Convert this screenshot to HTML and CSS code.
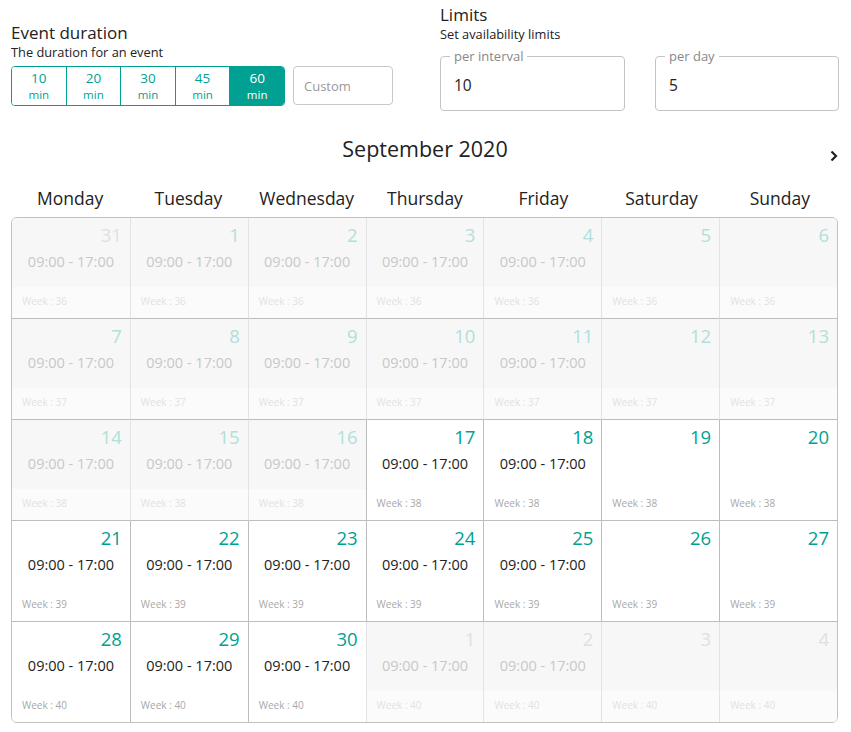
FILE: index.html
```html
<!DOCTYPE html>
<html>
<head>
<meta charset="utf-8">
<link rel="stylesheet" href="styles.css">
</head>
<body>
<div class="page">
  <div class="top">
    <section class="duration">
      <h2 class="title">Event duration</h2>
      <p class="sub">The duration for an event</p>
      <div class="dur-row">
        <div class="seg">
          <button class="seg-btn"><span class="num">10</span><span class="unit">min</span></button>
          <button class="seg-btn"><span class="num">20</span><span class="unit">min</span></button>
          <button class="seg-btn"><span class="num">30</span><span class="unit">min</span></button>
          <button class="seg-btn"><span class="num">45</span><span class="unit">min</span></button>
          <button class="seg-btn active"><span class="num">60</span><span class="unit">min</span></button>
        </div>
        <input class="custom" type="text" placeholder="Custom">
      </div>
    </section>
    <section class="limits">
      <h2 class="title">Limits</h2>
      <p class="sub">Set availability limits</p>
      <div class="fields">
        <fieldset class="field"><legend>per interval</legend><span class="val">10</span></fieldset>
        <fieldset class="field"><legend>per day</legend><span class="val">5</span></fieldset>
      </div>
    </section>
  </div>

  <div class="cal-head">
    <h1 class="month">September 2020</h1>
    <svg class="next" width="10" height="12" viewBox="0 0 10 12"><path d="M2.5 1.5 L7 6 L2.5 10.5" fill="none" stroke="#222" stroke-width="2.2"/></svg>
  </div>

  <div class="days">
    <div>Monday</div><div>Tuesday</div><div>Wednesday</div><div>Thursday</div><div>Friday</div><div>Saturday</div><div>Sunday</div>
  </div>

  <div class="grid">
    <!-- row 1 -->
    <div class="cell off out first"><div class="d">31</div><div class="t">09:00 - 17:00</div><div class="w">Week : 36</div></div>
    <div class="cell off"><div class="d">1</div><div class="t">09:00 - 17:00</div><div class="w">Week : 36</div></div>
    <div class="cell off"><div class="d">2</div><div class="t">09:00 - 17:00</div><div class="w">Week : 36</div></div>
    <div class="cell off"><div class="d">3</div><div class="t">09:00 - 17:00</div><div class="w">Week : 36</div></div>
    <div class="cell off"><div class="d">4</div><div class="t">09:00 - 17:00</div><div class="w">Week : 36</div></div>
    <div class="cell off"><div class="d">5</div><div class="w">Week : 36</div></div>
    <div class="cell off"><div class="d">6</div><div class="w">Week : 36</div></div>
    <!-- row 2 -->
    <div class="cell off first"><div class="d">7</div><div class="t">09:00 - 17:00</div><div class="w">Week : 37</div></div>
    <div class="cell off"><div class="d">8</div><div class="t">09:00 - 17:00</div><div class="w">Week : 37</div></div>
    <div class="cell off"><div class="d">9</div><div class="t">09:00 - 17:00</div><div class="w">Week : 37</div></div>
    <div class="cell off"><div class="d">10</div><div class="t">09:00 - 17:00</div><div class="w">Week : 37</div></div>
    <div class="cell off"><div class="d">11</div><div class="t">09:00 - 17:00</div><div class="w">Week : 37</div></div>
    <div class="cell off"><div class="d">12</div><div class="w">Week : 37</div></div>
    <div class="cell off"><div class="d">13</div><div class="w">Week : 37</div></div>
    <!-- row 3 -->
    <div class="cell off first"><div class="d">14</div><div class="t">09:00 - 17:00</div><div class="w">Week : 38</div></div>
    <div class="cell off"><div class="d">15</div><div class="t">09:00 - 17:00</div><div class="w">Week : 38</div></div>
    <div class="cell off"><div class="d">16</div><div class="t">09:00 - 17:00</div><div class="w">Week : 38</div></div>
    <div class="cell"><div class="d">17</div><div class="t">09:00 - 17:00</div><div class="w">Week : 38</div></div>
    <div class="cell"><div class="d">18</div><div class="t">09:00 - 17:00</div><div class="w">Week : 38</div></div>
    <div class="cell"><div class="d">19</div><div class="w">Week : 38</div></div>
    <div class="cell"><div class="d">20</div><div class="w">Week : 38</div></div>
    <!-- row 4 -->
    <div class="cell first"><div class="d">21</div><div class="t">09:00 - 17:00</div><div class="w">Week : 39</div></div>
    <div class="cell"><div class="d">22</div><div class="t">09:00 - 17:00</div><div class="w">Week : 39</div></div>
    <div class="cell"><div class="d">23</div><div class="t">09:00 - 17:00</div><div class="w">Week : 39</div></div>
    <div class="cell"><div class="d">24</div><div class="t">09:00 - 17:00</div><div class="w">Week : 39</div></div>
    <div class="cell"><div class="d">25</div><div class="t">09:00 - 17:00</div><div class="w">Week : 39</div></div>
    <div class="cell"><div class="d">26</div><div class="w">Week : 39</div></div>
    <div class="cell"><div class="d">27</div><div class="w">Week : 39</div></div>
    <!-- row 5 -->
    <div class="cell first last"><div class="d">28</div><div class="t">09:00 - 17:00</div><div class="w">Week : 40</div></div>
    <div class="cell last"><div class="d">29</div><div class="t">09:00 - 17:00</div><div class="w">Week : 40</div></div>
    <div class="cell last"><div class="d">30</div><div class="t">09:00 - 17:00</div><div class="w">Week : 40</div></div>
    <div class="cell off out last"><div class="d">1</div><div class="t">09:00 - 17:00</div><div class="w">Week : 40</div></div>
    <div class="cell off out last"><div class="d">2</div><div class="t">09:00 - 17:00</div><div class="w">Week : 40</div></div>
    <div class="cell off out last"><div class="d">3</div><div class="w">Week : 40</div></div>
    <div class="cell off out last"><div class="d">4</div><div class="w">Week : 40</div></div>
  </div>
</div>
</body>
</html>
```

FILE: styles.css
```css
* { box-sizing: border-box; }
html, body { margin: 0; padding: 0; background: #fff; }
body {
  font-family: "Open Sans", "DejaVu Sans", sans-serif;
  color: #222;
}
.page { padding: 0 12px 0 11px; width: 851px; }

.top { display: flex; align-items: flex-start; }
.duration { width: 429px; padding-top: 21px; }
.limits { flex: 1; padding-top: 3px; }
.title { margin: 0; font-size: 17px; font-weight: 400; line-height: 23px; color: #222; }
.sub { margin: 0; font-size: 12.8px; line-height: 17px; color: #222; }

.dur-row { display: flex; gap: 8px; margin-top: 5px; }
.seg {
  display: flex;
  width: 274px;
  border: 1px solid #00a192;
  border-radius: 4px;
  overflow: hidden;
  height: 40px;
}
.seg-btn {
  flex: 1;
  border: 0;
  border-left: 1px solid #00a192;
  background: #fff;
  color: #00a192;
  font-family: inherit;
  padding: 0;
  display: flex;
  flex-direction: column;
  align-items: center;
  justify-content: center;
}
.seg-btn:first-child { border-left: 0; }
.seg-btn.active { background: #00a192; color: #fff; }
.num { font-size: 13.5px; line-height: 17px; font-weight: 500; }
.unit { font-size: 11.5px; line-height: 15px; }
.custom {
  width: 100px;
  height: 39px;
  border: 1px solid #c8c8c8;
  border-radius: 4px;
  padding: 0 10px;
  font-family: inherit;
  font-size: 13px;
  color: #222;
  outline: none;
}
.custom::placeholder { color: #999; }

.fields { display: flex; gap: 30px; margin-top: 6px; }
.field {
  margin: 0;
  width: 185px;
  height: 62px;
  border: 1px solid #c4c4c4;
  border-radius: 4px;
  padding: 0 13px;
}
.field + .field { width: 184px; }
.field legend {
  font-size: 13px;
  color: #888;
  padding: 0 4px;
  margin-left: -4px;
  line-height: 14px;
}
.val { display: block; font-size: 15.5px; line-height: 20px; margin-top: 12px; }

.cal-head {
  display: flex;
  align-items: center;
  justify-content: center;
  position: relative;
  margin-top: 24px;
  height: 28px;
}
.month { margin: 0; font-size: 21.5px; font-weight: 400; line-height: 28px; color: #222; }
.next { position: absolute; right: 0; top: 15px; }

.days {
  display: grid;
  grid-template-columns: repeat(7, 1fr);
  margin-top: 23px;
  height: 24px;
  font-size: 17.5px;
  line-height: 24px;
  text-align: center;
  font-weight: 500;
  color: #222;
}

.grid {
  display: grid;
  grid-template-columns: repeat(7, 1fr);
  margin-top: 7px;
  border: 1px solid #c2c2c2;
  border-radius: 6px;
  overflow: hidden;
  width: 827px;
}
.cell {
  height: 101px;
  border-left: 1px solid #bdbdbd;
  border-bottom: 1px solid #bdbdbd;
  background: #fff;
  display: flex;
  flex-direction: column;
}
.cell.first { border-left: 0; }
.cell.last { border-bottom: 0; height: 100px; }
.cell.off { background: #f7f7f7; border-left-color: #e3e3e3; }
.cell.first.off { border-left: 0; }

.d {
  text-align: right;
  padding: 5px 8px 0 0;
  font-size: 18.5px;
  line-height: 24px;
  font-weight: 500;
  color: #00a192;
}
.off .d { color: #b0e0da; }
.off.out .d { color: #e0e0e0; }
.t {
  text-align: center;
  margin-top: 5px;
  font-size: 14.5px;
  line-height: 20px;
  color: #222;
}
.off .t { color: #c8c8c8; }
.w {
  margin-top: auto;
  height: 31px;
  padding-left: 10px;
  font-size: 10px;
  line-height: 29px;
  color: #a8a8a8;
}
.off .w { background: #fbfbfb; color: #e2e2e2; }
```
